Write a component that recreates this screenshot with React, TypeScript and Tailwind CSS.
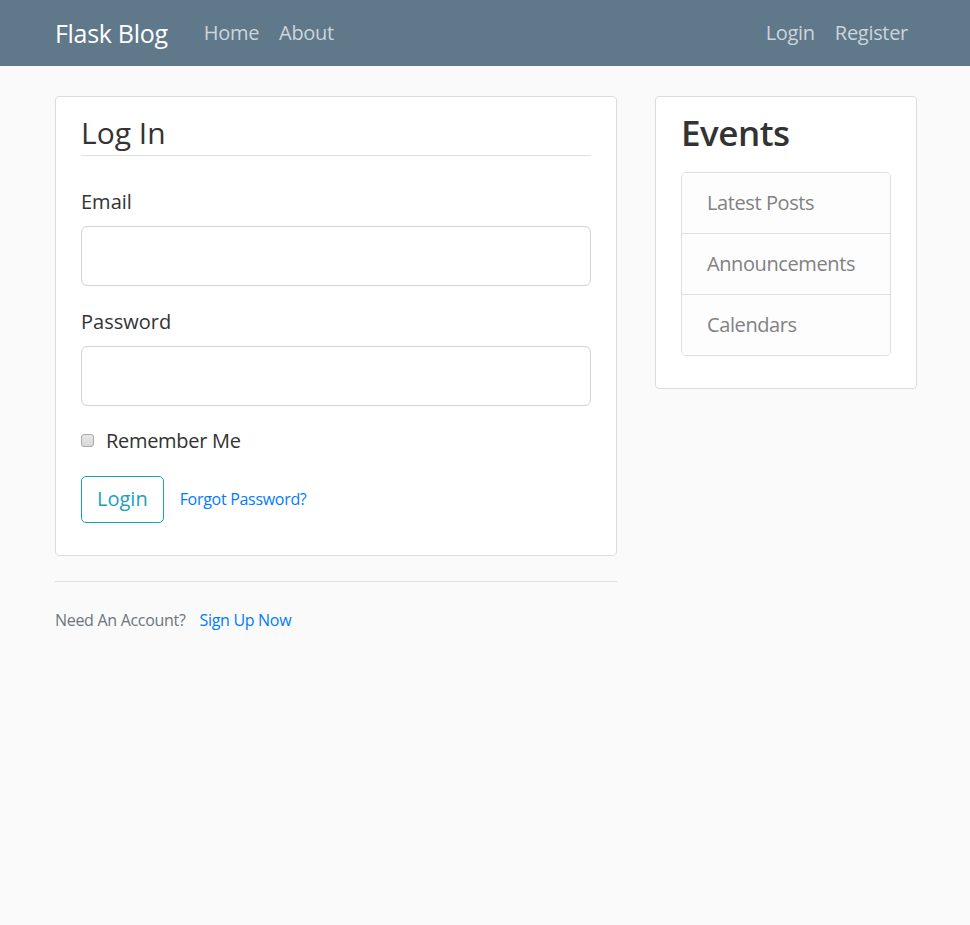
import React from 'react';

const font = { fontFamily: '"Open Sans", "Noto Sans", sans-serif' };

function Navbar() {
  return (
    <nav className="h-[66px] bg-[#5f788a]">
      <div className="mx-auto flex h-full w-[900px] items-center pl-[20px] pr-[17px]">
        <a className="mr-[26px] text-[25px] leading-none tracking-[-0.3px] text-white">Flask Blog</a>
        <div className="flex">
          <a className="px-[10px] text-[20px] tracking-[-0.3px] text-[#cbd5db]">Home</a>
          <a className="px-[10px] text-[20px] tracking-[-0.3px] text-[#cbd5db]">About</a>
        </div>
        <div className="ml-auto flex">
          <a className="px-[10px] text-[20px] tracking-[-0.3px] text-[#cbd5db]">Login</a>
          <a className="px-[10px] text-[20px] tracking-[-0.3px] text-[#cbd5db]">Register</a>
        </div>
      </div>
    </nav>
  );
}

function Field({ label, type }: { label: string; type: string }) {
  return (
    <div className="mb-[20px]">
      <label className="mb-[9px] block pt-[1px] text-[20px] leading-[30px]">{label}</label>
      <input
        type={type}
        className="block h-[60px] w-full rounded-[6px] border border-[#ced4da] bg-white px-[20px] text-[25px]"
      />
    </div>
  );
}

function LoginCard() {
  return (
    <div className="rounded-[4px] border border-[#ddd] bg-white px-[25px] pt-[12.5px] pb-[12.5px]">
      <div className="mb-[30px] border-b border-[#dee2e6] text-[30px] leading-[45px]">Log In</div>
      <Field label="Email" type="email" />
      <Field label="Password" type="password" />
      <div className="mb-[20px] flex items-center">
        <span className="mr-[12px] h-[13px] w-[13px] rounded-[3px] border border-[#a8a8a8] bg-gradient-to-b from-[#e8e8e8] to-[#d8d8d8]" />
        <span className="text-[20px] leading-[30px] tracking-[-0.3px]">Remember Me</span>
      </div>
      <div className="mb-[20px] flex items-center">
        <button className="h-[47px] rounded-[5px] border border-[#17a2b8] px-[15px] text-[20px] leading-[30px] text-[#17a2b8]">
          Login
        </button>
        <a className="ml-[16px] text-[16px] tracking-[-0.3px] text-[#007bff]">Forgot Password?</a>
      </div>
    </div>
  );
}

function Sidebar() {
  const items = ['Latest Posts', 'Announcements', 'Calendars'];
  return (
    <div className="rounded-[4px] border border-[#ddd] bg-white px-[25px] pt-[12.5px] pb-[12.5px]">
      <h3 className="mb-[18px] pt-[2px] text-[35px] font-semibold leading-[42px] tracking-[-0.5px] text-[#333]">
        Events
      </h3>
      <ul className="mb-[20px] overflow-hidden rounded-[5px] border border-[#dfdfdf]">
        {items.map((item, i) => (
          <li
            key={item}
            className={`bg-[#fdfdfe] px-[25px] py-[15px] text-[20px] leading-[30px] tracking-[-0.4px] text-[#818182] ${
              i > 0 ? 'border-t border-[#dfdfdf]' : ''
            }`}
          >
            {item}
          </li>
        ))}
      </ul>
    </div>
  );
}

export default function App() {
  return (
    <div className="min-h-[925px] bg-[#fafafa] text-[#333]" style={font}>
      <Navbar />
      <main className="mx-auto flex w-[900px] gap-[38px] px-[20px] pt-[30px]">
        <div className="w-[562px] shrink-0">
          <LoginCard />
          <div className="mt-[25px] border-t border-[#dee2e6] pt-[26px] text-[16px] leading-[24px] tracking-[-0.3px] text-[#6c757d]">
            Need An Account? <a className="ml-[10px] text-[#007bff]">Sign Up Now</a>
          </div>
        </div>
        <div className="w-[262px] shrink-0">
          <Sidebar />
        </div>
      </main>
    </div>
  );
}
